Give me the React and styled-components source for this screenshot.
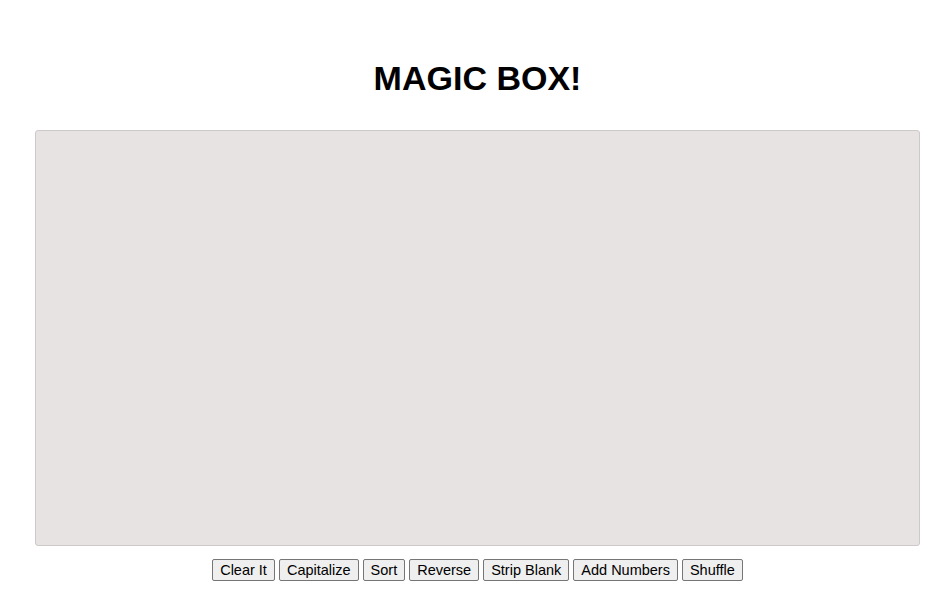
import React, {useState} from 'react';
import styled, {createGlobalStyle} from 'styled-components'

const GlobalStyle = createGlobalStyle`
  html, body {
    margin: 0;
    padding: 0;
    background: #ffffff;
  }
  body {
    font-family: "Liberation Sans", Arial, sans-serif;
  }
`

const Page = styled.div`
  display: flex;
  flex-direction: column;
  align-items: center;
  padding: 58px 32px 0 35px;
`

const Title = styled.h1`
  margin: 0 0 32px 0;
  font-size: 34px;
  line-height: 40px;
  font-weight: bold;
  color: #000;
`

const Box = styled.textarea`
  box-sizing: border-box;
  width: 100%;
  height: 416px;
  background: #e7e3e3;
  border: 1px solid #cdc9c9;
  border-radius: 3px;
  resize: none;
  outline: none;
  padding: 4px;
  font-family: "Liberation Sans", Arial, sans-serif;
  font-size: 14px;
`

const Toolbar = styled.div`
  display: flex;
  justify-content: center;
  gap: 4px;
  margin-top: 13px;
`

const Button = styled.button`
  box-sizing: border-box;
  height: 22px;
  padding: 1px 7px;
  font-family: "Liberation Sans", Arial, sans-serif;
  font-size: 14.5px;
  line-height: 18px;
  color: #000;
  background: #efefef;
  border: 1px solid #767676;
  border-radius: 2px;
  cursor: pointer;
  &:hover {
    background: #e5e5e5;
  }
`

const App = () => {
    const [text, setText] = useState('')
    const lines = () => text.split('\n')

    const actions = [
        ['Clear It', () => setText('')],
        ['Capitalize', () => setText(text.toUpperCase())],
        ['Sort', () => setText(lines().sort().join('\n'))],
        ['Reverse', () => setText(lines().reverse().join('\n'))],
        ['Strip Blank', () => setText(lines().filter(l => l.trim() !== '').join('\n'))],
        ['Add Numbers', () => setText(lines().map((l, i) => (i + 1) + '. ' + l).join('\n'))],
        ['Shuffle', () => setText(lines().sort(() => Math.random() - 0.5).join('\n'))],
    ]

    return (
        <>
            <GlobalStyle/>
            <Page>
                <Title>MAGIC BOX!</Title>
                <Box value={text} onChange={e => setText(e.target.value)}/>
                <Toolbar>
                    {actions.map(([label, fn]) => (
                        <Button key={label} onClick={fn}>{label}</Button>
                    ))}
                </Toolbar>
            </Page>
        </>
    )
}

export default App
